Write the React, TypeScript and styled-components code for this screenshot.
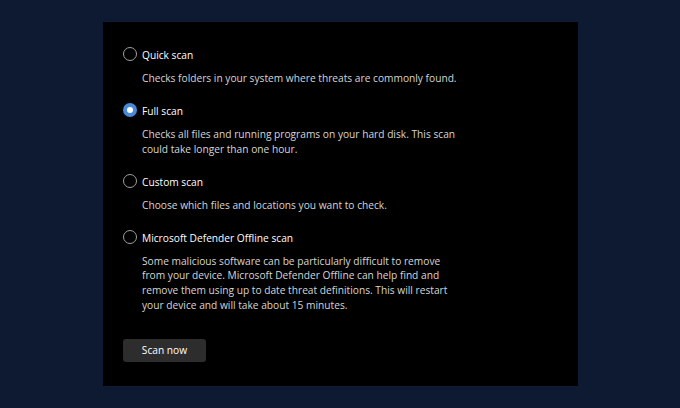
import styled, { createGlobalStyle } from "styled-components";

const GlobalStyle = createGlobalStyle`
  html, body {
    margin: 0;
    padding: 0;
    background: #0d1a32;
  }
  body {
    font-family: "Open Sans", "Noto Sans", sans-serif;
  }
`;

// fundo azul escuro com o painel preto lá dentro
const Page = styled.div`
  width: 680px;
  height: 408px;
  padding: 22px 0 0 103px;
  box-sizing: border-box;
`;

const Panel = styled.div`
  width: 475px;
  height: 364px;
  background: #000;
  box-sizing: border-box;
  padding: 23px 20px 0 20px;
  display: flex;
  flex-direction: column;
`;

const Option = styled.div`
  display: grid;
  grid-template-columns: 14px 1fr;
  column-gap: 5px;
  margin-bottom: 15.5px;
`;

const Label = styled.label`
  display: flex;
  align-items: center;
  height: 20px;
  font-size: 10.2px;
  color: #ffffff;
  white-space: nowrap;
`;

interface RadioProps {
  checked: boolean;
}

const Radio = styled.span<RadioProps>`
  align-self: center;
  width: 14px;
  height: 14px;
  margin-top: -2px;
  border-radius: 50%;
  box-sizing: border-box;
  border: ${(props) => (props.checked ? "none" : "1px solid #a0a0a0")};
  background: ${(props) => (props.checked ? "#4a88d8" : "transparent")};
  display: flex;
  align-items: center;
  justify-content: center;

  &::after {
    content: "";
    display: ${(props) => (props.checked ? "block" : "none")};
    width: 6px;
    height: 6px;
    border-radius: 50%;
    background: #fff;
  }
`;

const Description = styled.div`
  grid-column: 2;
  margin-top: 6px;
  font-size: 10.2px;
  line-height: 14.6px;
  color: #d6d6d6;
  white-space: nowrap;
`;

const ScanButton = styled.button`
  margin-top: 11px;
  width: 83px;
  height: 23px;
  border: none;
  border-radius: 3px;
  background: #2d2d2d;
  color: #ffffff;
  font-family: inherit;
  font-size: 10.2px;
  padding: 0;
`;

interface ScanOption {
  label: string;
  lines: string[];
}

const options: ScanOption[] = [
  {
    label: "Quick scan",
    lines: ["Checks folders in your system where threats are commonly found."],
  },
  {
    label: "Full scan",
    lines: [
      "Checks all files and running programs on your hard disk. This scan",
      "could take longer than one hour.",
    ],
  },
  {
    label: "Custom scan",
    lines: ["Choose which files and locations you want to check."],
  },
  {
    label: "Microsoft Defender Offline scan",
    lines: [
      "Some malicious software can be particularly difficult to remove",
      "from your device. Microsoft Defender Offline can help find and",
      "remove them using up to date threat definitions. This will restart",
      "your device and will take about 15 minutes.",
    ],
  },
];

function App() {
  const selected = 1;

  return (
    <>
      <GlobalStyle />
      <Page>
        <Panel>
          {options.map((option, index) => (
            <Option key={option.label}>
              <Radio checked={index === selected} />
              <Label>{option.label}</Label>
              <Description>
                {option.lines.map((line) => (
                  <div key={line}>{line}</div>
                ))}
              </Description>
            </Option>
          ))}
          <ScanButton>Scan now</ScanButton>
        </Panel>
      </Page>
    </>
  );
}

export default App;
